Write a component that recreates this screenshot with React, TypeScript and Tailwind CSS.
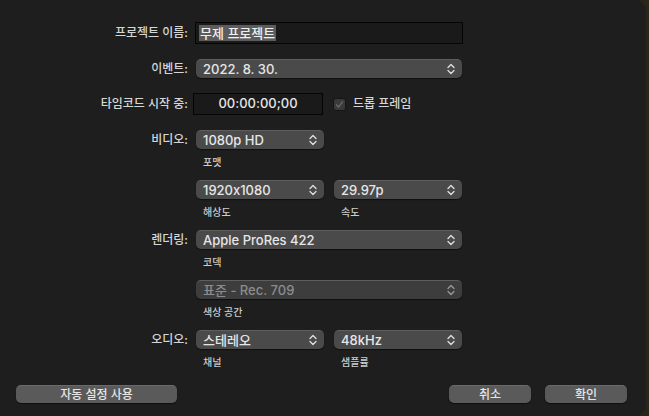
import React from 'react';

const FONT = { fontFamily: '"Inter", "Noto Sans CJK KR", sans-serif' };

const Chevrons: React.FC<{ dim?: boolean }> = ({ dim }) => (
  <svg width="8" height="12" viewBox="0 0 8 12" className="shrink-0">
    <path
      d="M1 4.5 L4 1.5 L7 4.5 M1 7.5 L4 10.5 L7 7.5"
      fill="none"
      stroke={dim ? '#9a9a9a' : '#e0e0e0'}
      strokeWidth="1.3"
      strokeLinecap="round"
      strokeLinejoin="round"
    />
  </svg>
);

interface PopupProps {
  value: string;
  wide?: boolean;
  disabled?: boolean;
}

const Popup: React.FC<PopupProps> = ({ value, wide, disabled }) => (
  <div
    className={`flex items-center justify-between h-[19px] rounded-[5px] pl-[7px] pr-[7px] border-t border-[#5e5e5e] shadow-[0_1px_1px_rgba(0,0,0,0.5)] ${
      wide ? 'w-[266px]' : 'w-[128px]'
    } ${disabled ? 'bg-[#3d3d3d]' : 'bg-[#4a4a4a]'}`}
  >
    <span className={`text-[13px] font-medium leading-none ${disabled ? 'text-[#8c8c8c]' : 'text-[#e6e6e6]'}`}>{value}</span>
    <Chevrons dim={disabled} />
  </div>
);

const Caption: React.FC<{ text: string }> = ({ text }) => (
  <div className="text-[10px] font-medium leading-none text-[#cdcdcd] mt-[8px] pl-[7px]">{text}</div>
);

const Row: React.FC<{ label?: string; className?: string; children: React.ReactNode }> = ({ label, className, children }) => (
  <div className={`flex items-start ${className ?? ''}`}>
    <div className="w-[188px] text-right text-[12px] font-medium text-[#d6d6d6] leading-[19px] shrink-0">{label}</div>
    <div className="ml-[8px]">{children}</div>
  </div>
);

const Button: React.FC<{ text: string; className: string }> = ({ text, className }) => (
  <div
    className={`h-[18px] rounded-[5px] bg-[#5a5a5a] border-t border-[#6a6a6a] shadow-[0_1px_1px_rgba(0,0,0,0.5)] flex items-center justify-center text-[12px] font-medium text-[#e6e6e6] ${className}`}
  >
    {text}
  </div>
);

export default function App() {
  return (
    <div className="w-[649px] h-[416px] bg-[#2b2418] flex [font-feature-settings:'calt'_0]" style={FONT}>
      <div className="w-[646px] h-[416px] bg-[#1e1e1e] rounded-r-[11px] flex flex-col">
        <div className="flex items-center mt-[22px]">
          <div className="w-[188px] text-right text-[12px] font-medium text-[#d6d6d6] shrink-0">프로젝트 이름:</div>
          <div className="ml-[7px] w-[268px] h-[22px] bg-[#1a1a1a] border border-[#050505] flex items-center pl-[3px]">
            <span className="bg-[#5c5c5c] text-[13px] font-medium text-[#f0f0f0] leading-[16px] px-[1px]">무제 프로젝트</span>
          </div>
        </div>

        <Row label="이벤트:" className="mt-[15px]">
          <Popup value="2022. 8. 30." wide />
        </Row>

        <div className="flex items-center mt-[15px]">
          <div className="w-[188px] text-right text-[12px] font-medium text-[#d6d6d6] shrink-0">타임코드 시작 중:</div>
          <div className="ml-[5px] w-[130px] h-[22px] bg-[#1a1a1a] border border-[#050505] flex items-center justify-center text-[13px] font-medium text-[#e6e6e6]">
            00:00:00;00
          </div>
          <div className="ml-[10px] w-[13px] h-[13px] rounded-[3px] bg-[#3a3a3a] border border-[#151515] flex items-center justify-center">
            <svg width="9" height="9" viewBox="0 0 9 9">
              <path d="M1.5 4.8 L3.6 7 L7.5 1.8" fill="none" stroke="#6e6e6e" strokeWidth="1.2" strokeLinecap="round" strokeLinejoin="round" />
            </svg>
          </div>
          <div className="ml-[7px] text-[12px] font-medium text-[#d6d6d6]">드롭 프레임</div>
        </div>

        <Row label="비디오:" className="mt-[15px]">
          <Popup value="1080p HD" />
          <Caption text="포맷" />
        </Row>

        <Row className="mt-[13px]">
          <div className="flex gap-[10px]">
            <div>
              <Popup value="1920x1080" />
              <Caption text="해상도" />
            </div>
            <div>
              <Popup value="29.97p" />
              <Caption text="속도" />
            </div>
          </div>
        </Row>

        <Row label="렌더링:" className="mt-[13px]">
          <Popup value="Apple ProRes 422" wide />
          <Caption text="코덱" />
        </Row>

        <Row className="mt-[13px]">
          <Popup value="표준 - Rec. 709" wide disabled />
          <Caption text="색상 공간" />
        </Row>

        <Row label="오디오:" className="mt-[13px]">
          <div className="flex gap-[10px]">
            <div>
              <Popup value="스테레오" />
              <Caption text="채널" />
            </div>
            <div>
              <Popup value="48kHz" />
              <Caption text="샘플률" />
            </div>
          </div>
        </Row>

        <div className="flex items-center mt-[18px] px-[16px]">
          <Button text="자동 설정 사용" className="w-[161px]" />
          <div className="flex-1" />
          <Button text="취소" className="w-[82px]" />
          <Button text="확인" className="w-[82px] ml-[14px]" />
          <div className="w-[3px]" />
        </div>
      </div>
    </div>
  );
}
